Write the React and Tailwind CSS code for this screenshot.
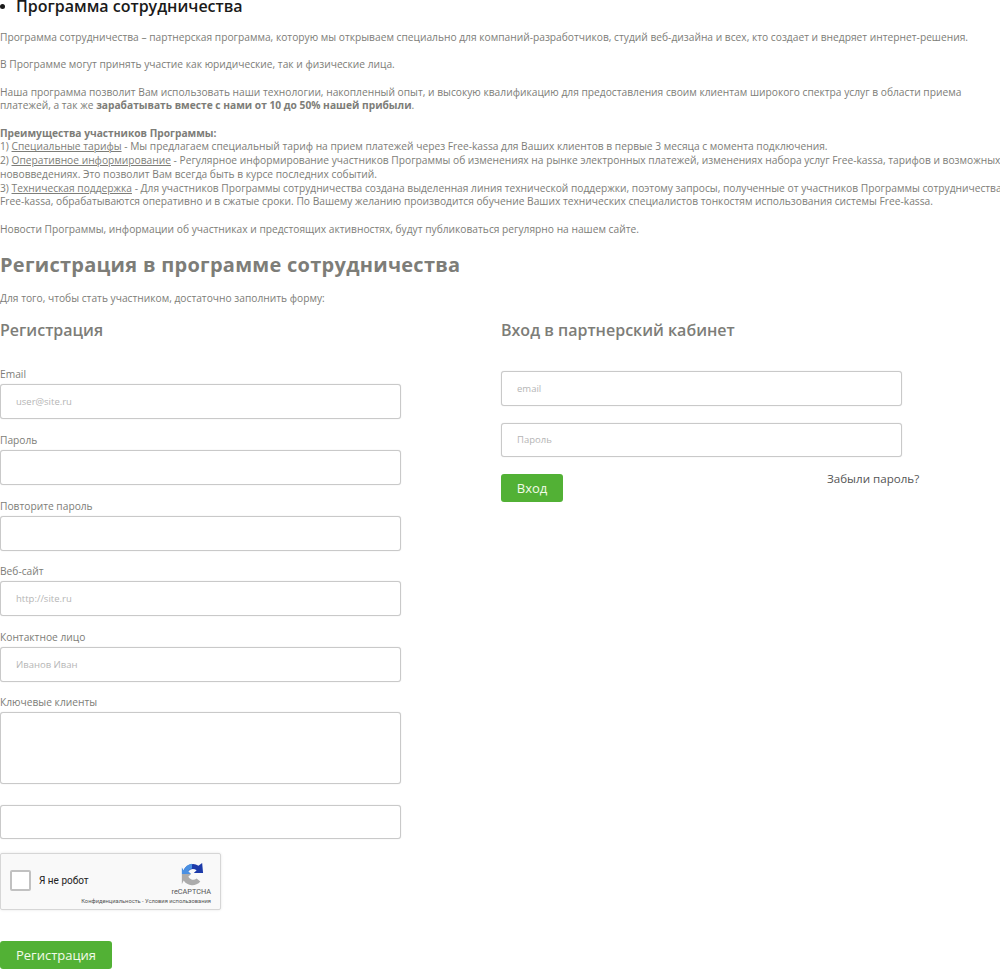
import React from "react";

const FONT = "font-['Open_Sans',sans-serif]";

function Field({ label, placeholder, top }) {
  return (
    <div className={top}>
      <div className="text-[10.22px] leading-[14px] text-[#7d7d78]">{label}</div>
      <input
        readOnly
        placeholder={placeholder}
        className="mt-[3px] block h-[35px] w-[401px] rounded-[3px] border border-[#c9c9c9] bg-white px-[15px] text-[9.5px] text-[#777] outline-none shadow-[0_0_1px_#ccc] placeholder:text-[#b5b5b5]"
      />
    </div>
  );
}

function Captcha() {
  return (
    <div className="relative mt-[14px] h-[57px] w-[221px] rounded-[2px] border border-[#d6d6d6] bg-[#f9f9f9] shadow-[0_0_3px_rgba(0,0,0,0.1)]">
      <div className="absolute left-[9px] top-[16px] h-[21px] w-[21px] rounded-[2px] border-2 border-[#c1c1c1] bg-white" />
      <div className="absolute left-[38px] top-[20px] font-['Roboto',sans-serif] text-[10px] leading-[14px] text-[#222]">Я не робот</div>
      <svg className="absolute left-[179px] top-[8px]" width="24" height="24" viewBox="0 0 26 26" fill="none">
        <path d="M4 9 A11 11 0 0 1 20 4 L24 1 L25 12 L15 12 L18 9 A7 7 0 0 0 9 10 Z" fill="#1c3aa9" />
        <path d="M4 9 A11 11 0 0 1 13 2 L13 7 A7 7 0 0 0 9 10 L12 13 L2 13 L2 6 Z" fill="#4a90e2" />
        <path d="M2 13 L12 13 L9 16 A6 6 0 0 0 18 18 L22 21 A11 11 0 0 1 4 20 L2 24 Z" fill="#ababab" />
      </svg>
      <div className="absolute right-[9px] top-[33px] font-['Roboto',sans-serif] text-[7.3px] leading-[10px] text-[#555]">reCAPTCHA</div>
      <div className="absolute right-[9px] top-[44px] whitespace-nowrap font-['Roboto',sans-serif] text-[5.75px] leading-[7px] text-[#555]">Конфиденциальность - Условия использования</div>
    </div>
  );
}

export default function App() {
  return (
    <div className={`${FONT} h-[969px] w-[1000px] overflow-hidden bg-white text-[10.22px] leading-[13.68px] text-[#7d7d78]`}>
      <div className="flex h-[13px] items-center whitespace-nowrap text-[16px] font-semibold text-[#1a1a1a]">
        <span className="mr-[11px] h-[5px] w-[5px] rounded-full bg-[#1a1a1a]" />
        Программа сотрудничества
      </div>

      <div className="mt-[18px] w-[1000px] whitespace-nowrap">
        <p>Программа сотрудничества – партнерская программа, которую мы открываем специально для компаний-разработчиков, студий веб-дизайна и всех, кто создает и внедряет интернет-решения.</p>
        <p className="mt-[13.68px]">В Программе могут принять участие как юридические, так и физические лица.</p>
        <p className="mt-[13.68px]">
          Наша программа позволит Вам использовать наши технологии, накопленный опыт, и высокую квалификацию для предоставления своим клиентам широкого спектра услуг в области приема
          <br />
          платежей, а так же <b className="font-bold">зарабатывать вместе с нами от 10 до 50% нашей прибыли</b>.
        </p>
        <p className="mt-[13.68px]">
          <b className="font-bold">Преимущества участников Программы:</b>
          <br />
          1) <u>Специальные тарифы</u> - Мы предлагаем специальный тариф на прием платежей через Free-kassa для Ваших клиентов в первые 3 месяца с момента подключения.
          <br />
          2) <u>Оперативное информирование</u> - Регулярное информирование участников Программы об изменениях на рынке электронных платежей, изменениях набора услуг Free-kassa, тарифов и возможных
          <br />
          нововведениях. Это позволит Вам всегда быть в курсе последних событий.
          <br />
          3) <u>Техническая поддержка</u> - Для участников Программы сотрудничества создана выделенная линия технической поддержки, поэтому запросы, полученные от участников Программы сотрудничества
          <br />
          Free-kassa, обрабатываются оперативно и в сжатые сроки. По Вашему желанию производится обучение Ваших технических специалистов тонкостям использования системы Free-kassa.
        </p>
        <p className="mt-[13.68px]">Новости Программы, информации об участниках и предстоящих активностях, будут публиковаться регулярно на нашем сайте.</p>
      </div>

      <h1 className="mt-[14px] whitespace-nowrap text-[20px] font-bold leading-[30px] tracking-[0.27px] text-[#7d7d78]">Регистрация в программе сотрудничества</h1>
      <p className="mt-[12px] whitespace-nowrap">Для того, чтобы стать участником, достаточно заполнить форму:</p>

      <div className="mt-[13px] flex items-start">
        <div className="w-[501px]">
          <h2 className="text-[16px] font-semibold leading-[22px] text-[#7d7d78]">Регистрация</h2>
          <Field label="Email" placeholder="user@site.ru" top="mt-[26px]" />
          <Field label="Пароль" top="mt-[14px]" />
          <Field label="Повторите пароль" top="mt-[14px]" />
          <Field label="Веб-сайт" placeholder="http://site.ru" top="mt-[13px]" />
          <Field label="Контактное лицо" placeholder="Иванов Иван" top="mt-[14px]" />
          <div className="mt-[13px]">
            <div className="text-[10.22px] leading-[14px]">Ключевые клиенты</div>
            <textarea readOnly className="mt-[3px] block h-[72px] w-[401px] resize-none rounded-[3px] border border-[#c9c9c9] bg-white shadow-[0_0_1px_#ccc] outline-none" />
          </div>
          <input readOnly className="mt-[21px] block h-[34px] w-[401px] rounded-[3px] border border-[#c9c9c9] bg-white shadow-[0_0_1px_#ccc] outline-none" />
          <Captcha />
          <button className="mt-[31px] block h-[28px] w-[112px] rounded-[3px] bg-[#52b135] text-[13px] leading-[28px] text-[#f2fbe9]">Регистрация</button>
        </div>

        <div className="w-[499px]">
          <h2 className="text-[16px] font-semibold leading-[22px] text-[#7d7d78]">Вход в партнерский кабинет</h2>
          <input readOnly placeholder="email" className="mt-[30px] block h-[35px] w-[401px] rounded-[3px] border border-[#c9c9c9] bg-white px-[15px] text-[9.5px] shadow-[0_0_1px_#ccc] outline-none placeholder:text-[#b5b5b5]" />
          <input readOnly placeholder="Пароль" className="mt-[17px] block h-[34px] w-[401px] rounded-[3px] border border-[#c9c9c9] bg-white px-[15px] text-[9.5px] shadow-[0_0_1px_#ccc] outline-none placeholder:text-[#b5b5b5]" />
          <div className="mt-[17px] flex items-start">
            <button className="h-[28px] w-[62px] rounded-[3px] bg-[#52b135] text-[13px] leading-[28px] text-[#f2fbe9]">Вход</button>
            <a className="ml-[264px] text-[11.6px] leading-[10px] text-[#555]">Забыли пароль?</a>
          </div>
        </div>
      </div>
    </div>
  );
}
